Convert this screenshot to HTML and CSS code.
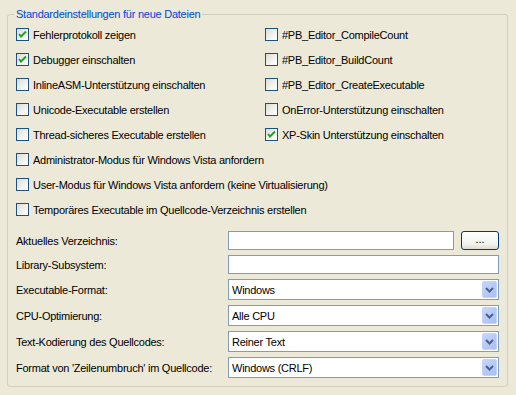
FILE: index.html
```html
<!DOCTYPE html>
<html lang="de">
  <head>
    <meta charset="UTF-8" />
    <meta name="viewport" content="width=device-width, initial-scale=1.0" />
    <title>Compiler-Optionen</title>
    <link rel="stylesheet" href="styles.css">
  </head>

  <body>
    <fieldset class="gruppe">
      <legend>Standardeinstellungen für neue Dateien</legend>

      <div class="optionen">
        <label class="option"><span class="box an"><svg viewBox="0 0 11 11"><path d="M2 5 L4 7.5 L9 2.5" /></svg></span>Fehlerprotokoll zeigen</label>
        <label class="option"><span class="box"></span>#PB_Editor_CompileCount</label>

        <label class="option"><span class="box an"><svg viewBox="0 0 11 11"><path d="M2 5 L4 7.5 L9 2.5" /></svg></span>Debugger einschalten</label>
        <label class="option"><span class="box"></span>#PB_Editor_BuildCount</label>

        <label class="option"><span class="box"></span>InlineASM-Unterstützung einschalten</label>
        <label class="option"><span class="box"></span>#PB_Editor_CreateExecutable</label>

        <label class="option"><span class="box"></span>Unicode-Executable erstellen</label>
        <label class="option"><span class="box"></span>OnError-Unterstützung einschalten</label>

        <label class="option"><span class="box"></span>Thread-sicheres Executable erstellen</label>
        <label class="option"><span class="box an"><svg viewBox="0 0 11 11"><path d="M2 5 L4 7.5 L9 2.5" /></svg></span>XP-Skin Unterstützung einschalten</label>

        <label class="option breit"><span class="box"></span>Administrator-Modus für Windows Vista anfordern</label>
        <label class="option breit"><span class="box"></span>User-Modus für Windows Vista anfordern (keine Virtualisierung)</label>
        <label class="option breit"><span class="box"></span>Temporäres Executable im Quellcode-Verzeichnis erstellen</label>
      </div>

      <div class="felder">
        <div class="zeile">
          <span class="beschriftung">Aktuelles Verzeichnis:</span>
          <div class="mit-knopf">
            <div class="eingabe"></div>
            <button class="knopf">...</button>
          </div>
        </div>
        <div class="zeile">
          <span class="beschriftung">Library-Subsystem:</span>
          <div class="eingabe"></div>
        </div>
        <div class="zeile">
          <span class="beschriftung">Executable-Format:</span>
          <div class="auswahl"><span>Windows</span><span class="pfeil"><svg viewBox="0 0 9 6"><path d="M1 1 L4.5 4.5 L8 1" /></svg></span></div>
        </div>
        <div class="zeile">
          <span class="beschriftung">CPU-Optimierung:</span>
          <div class="auswahl"><span>Alle CPU</span><span class="pfeil"><svg viewBox="0 0 9 6"><path d="M1 1 L4.5 4.5 L8 1" /></svg></span></div>
        </div>
        <div class="zeile">
          <span class="beschriftung">Text-Kodierung des Quellcodes:</span>
          <div class="auswahl"><span>Reiner Text</span><span class="pfeil"><svg viewBox="0 0 9 6"><path d="M1 1 L4.5 4.5 L8 1" /></svg></span></div>
        </div>
        <div class="zeile">
          <span class="beschriftung">Format von 'Zeilenumbruch' im Quellcode:</span>
          <div class="auswahl"><span>Windows (CRLF)</span><span class="pfeil"><svg viewBox="0 0 9 6"><path d="M1 1 L4.5 4.5 L8 1" /></svg></span></div>
        </div>
      </div>
    </fieldset>
  </body>
</html>
```

FILE: styles.css
```css
body {
  font-family: "Liberation Sans", Arial, sans-serif;
  font-size: 11px;
  letter-spacing: -0.25px;
  margin: 0;
  padding: 0;
  background-color: #ece9d8;
  color: #000;
}

.gruppe {
  margin: 8px 8px 0 7px;
  padding: 1px 8px 7px 8px;
  border: 1px solid #d0d0bf;
  border-radius: 3px;
  height: 379px;
  box-sizing: border-box;
  min-width: 0;
}

.gruppe legend {
  color: #0046d5;
  padding: 0 2px;
  margin-left: -2px;
  line-height: 13px;
}

/* Checkboxen */
.optionen {
  display: grid;
  grid-template-columns: 249px 1fr;
  grid-auto-rows: 25px;
}

.option {
  display: flex;
  align-items: center;
  white-space: nowrap;
}

.option.breit {
  grid-column: 1 / 3;
}

.box {
  width: 13px;
  height: 13px;
  box-sizing: border-box;
  border: 1px solid #1c5180;
  background: linear-gradient(135deg, #dcdcd7 0%, #f3f3ef 60%, #ffffff 100%);
  margin-right: 4px;
  flex: none;
  display: flex;
  align-items: center;
  justify-content: center;
}

.box svg {
  width: 11px;
  height: 11px;
}

.box svg path {
  fill: none;
  stroke: #21a121;
  stroke-width: 2;
}

/* Eingabefelder */
.felder {
  display: flex;
  flex-direction: column;
  gap: 5px;
  margin-top: 9px;
}

.zeile {
  display: grid;
  grid-template-columns: 212px 1fr;
  align-items: center;
  white-space: nowrap;
}

.mit-knopf {
  display: flex;
  gap: 7px;
}

.mit-knopf .eingabe {
  flex: 1;
}

.eingabe {
  height: 19px;
  box-sizing: border-box;
  border: 1px solid #7f9db9;
  background: #fff;
}

.knopf {
  width: 38px;
  height: 19px;
  padding: 0 0 4px 0;
  font-family: inherit;
  font-size: 11px;
  border: 1px solid #003c74;
  border-radius: 3px;
  background: linear-gradient(to bottom, #ffffff, #f2f2ee 70%, #dedcd3);
}

.auswahl {
  height: 21px;
  box-sizing: border-box;
  border: 1px solid #7f9db9;
  background: #fff;
  display: flex;
  align-items: center;
  justify-content: space-between;
  padding: 1px 1px 1px 3px;
}

.pfeil {
  width: 15px;
  height: 17px;
  box-sizing: border-box;
  border: 1px solid #c3d3fd;
  border-radius: 2px;
  background: linear-gradient(135deg, #c6d6fc, #b4c8f6 60%, #a9bff4);
  display: flex;
  align-items: center;
  justify-content: center;
}

.pfeil svg {
  width: 9px;
  height: 6px;
}

.pfeil svg path {
  fill: none;
  stroke: #4d6185;
  stroke-width: 2;
}
```
